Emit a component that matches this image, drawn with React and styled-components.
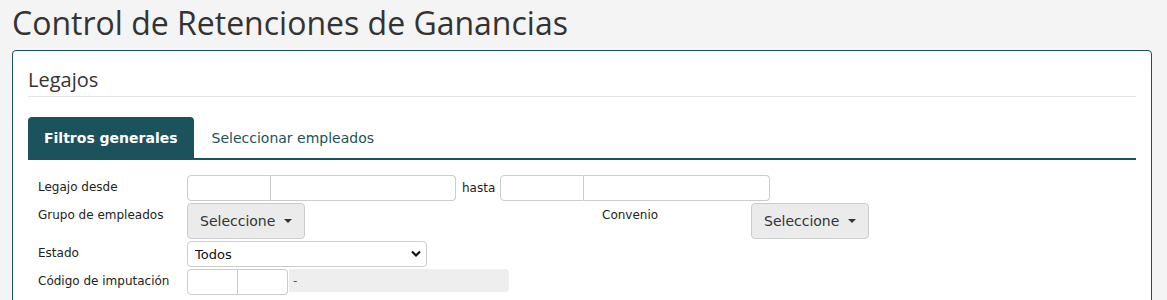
import React from "react";
import styled, { createGlobalStyle } from "styled-components";

const teal = "#1b525b";

const Global = createGlobalStyle`
  html, body { margin: 0; padding: 0; background: #f4f4f4; }
  body { font-family: "DejaVu Sans", Verdana, sans-serif; color: #333; }
  * { box-sizing: border-box; }
`;

const Title = styled.h1`
  margin: 0;
  padding: 3px 0 0 12px;
  height: 50px;
  font-family: "Open Sans", "Noto Sans", sans-serif;
  font-weight: 400;
  font-size: 32px;
  line-height: 40px;
  color: #333;
`;

const Panel = styled.section`
  margin: 0 15px 0 12px;
  background: #fff;
  border: 1px solid ${teal};
  border-radius: 4px;
  padding: 0 15px 10px;
  min-height: 260px;
`;

const PanelHeading = styled.h2`
  margin: 0;
  padding: 16px 0 0;
  height: 46px;
  font-family: "Open Sans", "Noto Sans", sans-serif;
  font-weight: 400;
  font-size: 20px;
  line-height: 26px;
  color: #333;
  border-bottom: 1px solid #e5e5e5;
`;

const TabBar = styled.div`
  display: flex;
  margin-top: 20px;
  border-bottom: 2px solid ${teal};
`;

const Tab = styled.div`
  height: 41px;
  padding: 0 16px;
  display: flex;
  align-items: center;
  font-size: 14px;
  font-weight: ${(p) => (p.$active ? 700 : 400)};
  color: ${(p) => (p.$active ? "#fff" : teal)};
  background: ${(p) => (p.$active ? teal : "transparent")};
  border-radius: 4px 4px 0 0;
  margin-right: 2px;
`;

const Form = styled.div`
  padding: 15px 0 0 10px;
  display: flex;
  flex-direction: column;
  gap: 2px;
`;

const Row = styled.div`
  display: flex;
  align-items: flex-start;
`;

const Label = styled.div`
  width: ${(p) => p.$w || 149}px;
  padding-top: 4px;
  font-size: 12px;
  line-height: 16px;
  color: #222;
  flex-shrink: 0;
`;

const InputGroup = styled.div`
  display: flex;
  height: 26px;
`;

const Input = styled.input`
  width: ${(p) => p.$w}px;
  height: 100%;
  border: 1px solid #ccc;
  border-radius: ${(p) =>
    p.$pos === "first" ? "4px 0 0 4px" : p.$pos === "last" ? "0 4px 4px 0" : "4px"};
  border-left-width: ${(p) => (p.$pos === "last" ? 0 : 1)}px;
  padding: 0 6px;
  font-size: 12px;
  background: #fff;
  outline: none;
`;

const Inline = styled.span`
  font-size: 12px;
  line-height: 26px;
  padding: 0 5px 0 6px;
  color: #222;
`;

const DropButton = styled.button`
  height: 36px;
  width: 118px;
  border: 1px solid #ccc;
  border-radius: 4px;
  background: #ebebeb;
  color: #333;
  font-family: "DejaVu Sans", Verdana, sans-serif;
  font-size: 14px;
  padding: 0 12px;
  display: flex;
  align-items: center;
  gap: 9px;
`;

const Caret = styled.span`
  width: 0;
  height: 0;
  border-left: 4px solid transparent;
  border-right: 4px solid transparent;
  border-top: 4px solid #333;
`;

const SelectWrap = styled.div`
  position: relative;
  width: 240px;
  height: 26px;
`;

const Select = styled.select`
  appearance: none;
  width: 100%;
  height: 100%;
  border: 1px solid #ccc;
  border-radius: 4px;
  background: #fff;
  font-family: "DejaVu Sans", Verdana, sans-serif;
  font-size: 13px;
  color: #111;
  padding: 0 7px;
  outline: none;
`;

const Chevron = styled.svg`
  position: absolute;
  right: 6px;
  top: 9px;
  pointer-events: none;
`;

const Readonly = styled.div`
  width: 220px;
  height: 23px;
  margin-left: 1px;
  background: #eeeeee;
  border-radius: 0 4px 4px 0;
  font-size: 12px;
  line-height: 24px;
  padding-left: 4px;
  color: #555;
`;

const Spacer = styled.div`
  width: ${(p) => p.$w}px;
  flex-shrink: 0;
`;

export default function App() {
  return (
    <>
      <Global />
      <Title>Control de Retenciones de Ganancias</Title>
      <Panel>
        <PanelHeading>Legajos</PanelHeading>
        <TabBar>
          <Tab $active>Filtros generales</Tab>
          <Tab>Seleccionar empleados</Tab>
        </TabBar>
        <Form>
          <Row>
            <Label>Legajo desde</Label>
            <InputGroup>
              <Input $w={84} $pos="first" />
              <Input $w={185} $pos="last" />
            </InputGroup>
            <Inline>hasta</Inline>
            <InputGroup>
              <Input $w={84} $pos="first" />
              <Input $w={186} $pos="last" />
            </InputGroup>
          </Row>
          <Row>
            <Label>Grupo de empleados</Label>
            <DropButton>
              Seleccione <Caret />
            </DropButton>
            <Spacer $w={297} />
            <Label>Convenio</Label>
            <DropButton>
              Seleccione <Caret />
            </DropButton>
          </Row>
          <Row>
            <Label>Estado</Label>
            <SelectWrap>
              <Select defaultValue="Todos">
                <option>Todos</option>
              </Select>
              <Chevron width="10" height="8" viewBox="0 0 10 8">
                <path d="M1 1.5 L5 5.5 L9 1.5" fill="none" stroke="#111" strokeWidth="2.2" />
              </Chevron>
            </SelectWrap>
          </Row>
          <Row>
            <Label>Código de imputación</Label>
            <InputGroup>
              <Input $w={51} $pos="first" />
              <Input $w={50} $pos="last" />
            </InputGroup>
            <Readonly>-</Readonly>
          </Row>
        </Form>
      </Panel>
    </>
  );
}
